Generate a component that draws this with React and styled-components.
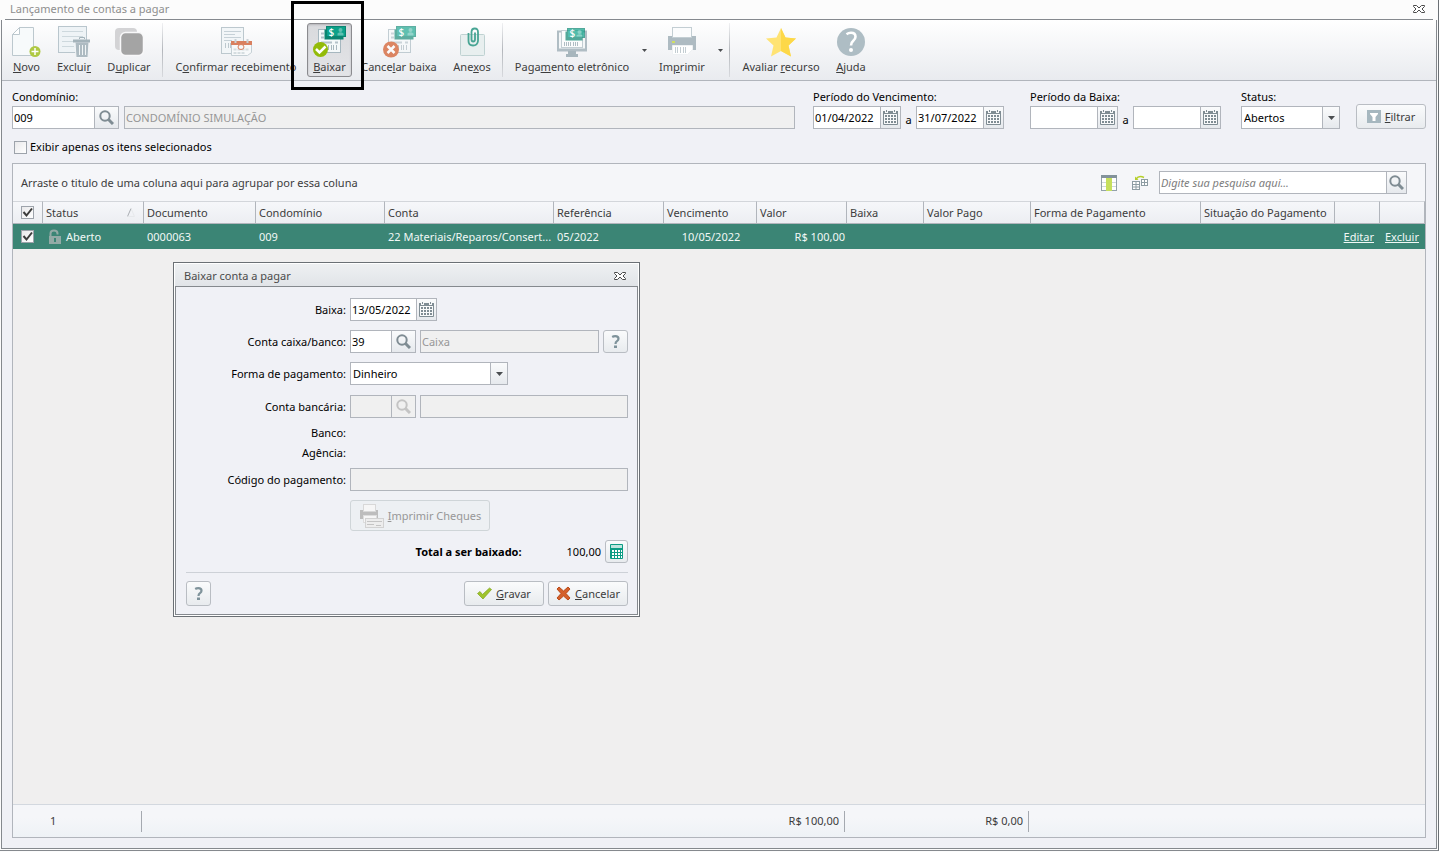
import React from 'react';
import styled, { createGlobalStyle, css } from 'styled-components';

const colors = {
  background: '#f0f1f6',
  line: '#b1b5bc',
  frame: '#85898e',
  text: '#3c3c3c',
  muted: '#979797',
  disabled: '#f0f0f0',
  row: '#3b8575',
  icon: '#7f8c93',
};

const GlobalStyle = createGlobalStyle`
  * {
    box-sizing: border-box;
  }

  body {
    margin: 0;
    background: #fcfcfc;
  }

  body, button, input, select {
    font-family: 'Noto Sans', 'Open Sans', sans-serif;
    font-size: 11px;
    line-height: 18px;
  }
`;

// ---------- Janela ----------

const Window = styled.div`
  position: relative;
  display: flex;
  flex-direction: column;
  min-height: calc(100vh - 1px);
  padding: 0 1px 1px;
  border-right: 1px solid #6b7075;
  border-bottom: 1px solid ${colors.frame};
`;

const TitleBar = styled.header`
  display: flex;
  align-items: center;
  justify-content: space-between;
  height: 20px;
  margin: 0 4px;
  padding: 0 8px 2px 5px;
  border-bottom: 1px solid ${colors.frame};
  color: #8e8e8e;
`;

const WindowTitle = styled.h1`
  margin: 0;
  font-size: 11px;
  font-weight: 400;
`;

const CloseButton = styled.button`
  display: flex;
  padding: 0;
  border: 0;
  background: none;
`;

const WindowBody = styled.main`
  flex: 1;
  display: flex;
  flex-direction: column;
  border: 1px solid ${colors.frame};
  border-top: 0;
  background: ${colors.background};
`;

// ---------- Barra de ferramentas ----------

const Toolbar = styled.nav`
  display: flex;
  align-items: center;
  height: 61px;
  padding: 0 2px;
  border-bottom: 1px solid ${colors.line};
  background: linear-gradient(#ffffff, #e9ebef);
`;

const ToolItem = styled.div`
  position: relative;
  flex: none;
  display: flex;
  width: ${props => props.$width}px;
`;

const ToolButton = styled.button`
  flex: 1;
  min-width: 0;
  display: flex;
  flex-direction: column;
  align-items: center;
  height: 54px;
  margin: 0 1px;
  padding: 2px 0 0;
  border: 1px solid transparent;
  border-radius: 3px;
  background: none;
  color: ${colors.text};
  white-space: nowrap;

  ${props => props.$pressed && css`
    border-color: #8b8b8f;
    background: linear-gradient(#d9dadd, #e3e4e7);
    box-shadow: inset 0 1px 2px #b5b5b9;
  `}
`;

const Highlight = styled.div`
  position: absolute;
  z-index: 1;
  top: -22px;
  bottom: -13px;
  left: -15px;
  right: -11px;
  border: 3px solid #000000;
  pointer-events: none;
`;

const DropButton = styled.button`
  display: flex;
  align-items: center;
  justify-content: center;
  width: 12px;
  height: 54px;
  padding: 0;
  border: 0;
  background: none;
`;

const Separator = styled.div`
  width: 1px;
  height: 54px;
  margin: 0 3px;
  background: linear-gradient(#f0f1f3, #b4b7bc, #d8dade);
`;

// ---------- Campos ----------

const Filters = styled.section`
  display: flex;
  align-items: flex-end;
  padding: 7px 10px 0;
`;

const FilterGroup = styled.div`
  flex: ${props => (props.$grow ? '1' : 'none')};
  min-width: 0;
  margin-right: ${props => props.$space}px;
`;

const FieldLabel = styled.label`
  display: block;
  color: #000000;
  white-space: nowrap;
`;

const Line = styled.div`
  display: flex;
  align-items: center;
  gap: ${props => props.$gap || 0}px;
`;

const Between = styled.span`
  width: 15px;
  padding-top: 4px;
  text-align: center;
`;

const Box = styled.div`
  flex: ${props => (props.$width ? 'none' : '1')};
  width: ${props => (props.$width ? `${props.$width}px` : 'auto')};
  min-width: 0;
  height: 23px;
  display: flex;
  border: 1px solid ${colors.line};
  background: ${props => (props.$disabled ? colors.disabled : '#ffffff')};
`;

const TextInput = styled.input`
  flex: 1;
  width: 0;
  min-width: 0;
  padding: 0 1px;
  border: 0;
  outline: 0;
  background: transparent;
  color: #000000;

  &:disabled {
    color: ${colors.muted};
  }

  &::placeholder {
    color: #7d7d7d;
    font-style: italic;
    opacity: 1;
  }
`;

const BoxButton = styled.button`
  flex: none;
  display: flex;
  align-items: center;
  justify-content: center;
  width: ${props => props.$width}px;
  padding: 0;
  border: 0;
  border-left: 1px solid ${colors.line};
  background: ${props => (props.disabled ? colors.disabled : 'linear-gradient(#fafbfc, #e6e9ed)')};
`;

const SelectBox = styled.div`
  display: grid;
  width: ${props => props.$width}px;
  height: 23px;
  border: 1px solid ${colors.line};
  background: #ffffff;
`;

const SelectInput = styled.select`
  grid-area: 1 / 1;
  appearance: none;
  padding: 0 18px 0 2px;
  border: 0;
  outline: 0;
  background: transparent;
  color: #000000;
`;

const SelectArrow = styled.span`
  grid-area: 1 / 1;
  justify-self: end;
  display: flex;
  align-items: center;
  justify-content: center;
  width: 17px;
  border-left: 1px solid ${colors.line};
  background: linear-gradient(#fafbfc, #e6e9ed);
  pointer-events: none;
`;

const PushButton = styled.button`
  flex: none;
  display: flex;
  align-items: center;
  justify-content: center;
  gap: 4px;
  width: ${props => props.$width}px;
  height: ${props => props.$height || 25}px;
  padding: 0;
  border: 1px solid #b9bdc3;
  border-radius: 3px;
  background: linear-gradient(#fafbfc, #e8ebee);
  color: ${colors.text};
  white-space: nowrap;

  &:disabled {
    border-color: #cfd5d8;
    background: #edf0f3;
    color: ${colors.muted};
  }
`;

const CheckRow = styled.div`
  display: flex;
  align-items: center;
  gap: 3px;
  margin: 9px 10px 7px 12px;
`;

const CheckWrap = styled.span`
  display: inline-grid;
  width: 13px;
  height: 13px;
  vertical-align: middle;

  svg {
    grid-area: 1 / 1;
    pointer-events: none;
  }
`;

const CheckInput = styled.input`
  grid-area: 1 / 1;
  appearance: none;
  width: 13px;
  height: 13px;
  margin: 0;
  border: 1px solid #9da3ab;
  background: linear-gradient(135deg, #e9e9eb, #ffffff);
`;

// ---------- Grade ----------

const GridPanel = styled.section`
  flex: 1;
  display: flex;
  flex-direction: column;
  margin: 0 10px 10px;
  border: 1px solid ${colors.line};
  background: #f0efef;
`;

const GroupBar = styled.div`
  display: flex;
  align-items: center;
  justify-content: space-between;
  height: 37px;
  padding: 0 18px 0 8px;
  background: #f5f6f9;
  color: ${colors.text};
`;

const GridTools = styled.div`
  display: flex;
  align-items: center;
`;

const IconButton = styled.button`
  display: flex;
  margin-right: ${props => props.$space}px;
  padding: 0;
  border: 0;
  background: none;
`;

const DataTable = styled.table`
  width: 100%;
  table-layout: fixed;
  border-collapse: separate;
  border-spacing: 0;
`;

const HeadCell = styled.th`
  height: 23px;
  padding: 0 0 0 3px;
  border: 0 solid ${colors.line};
  border-width: 1px 1px 1px 0;
  border-top-color: #d3d6db;
  background: linear-gradient(#f6f7fa, #eceef2);
  color: ${colors.text};
  font-weight: 400;
  line-height: 0;
  text-align: left;
  white-space: nowrap;
`;

const HeadContent = styled.span`
  display: flex;
  align-items: center;
  justify-content: space-between;
  padding-right: 8px;
  line-height: 18px;
`;

const Cell = styled.td`
  height: 25px;
  padding: 0 2px 0 3px;
  overflow: hidden;
  background: ${colors.row};
  color: #f1f8f6;
  text-align: ${props => props.$align || 'left'};
  white-space: nowrap;
`;

const CheckSlot = styled.span`
  display: flex;
  padding-left: 5px;
`;

const CellLink = styled.a`
  padding-right: 4px;
  color: #f1f8f6;
  text-decoration: underline;
`;

const StatusContent = styled.span`
  display: flex;
  align-items: center;
  gap: 5px;
  padding-left: 2px;
`;

const Summary = styled.footer`
  display: grid;
  grid-template-columns: 129fr 703fr 184fr 396fr;
  align-items: center;
  height: 33px;
  margin-top: auto;
  border-top: 1px solid #d3d8df;
  background: linear-gradient(#f5f6f9 40%, #eef2f6);
  color: ${colors.text};
`;

const SummaryCell = styled.span`
  height: 21px;
  padding: 1px 5px 0 37px;
  border-right: 1px solid #a5a9b0;
  text-align: ${props => props.$align || 'right'};
`;

// ---------- Diálogo ----------

const Dialog = styled.section`
  position: absolute;
  top: 262px;
  left: 173px;
  width: 467px;
  padding: 1px;
  border: 1px solid #6b7075;
  background: #ffffff;
`;

const DialogHeader = styled.header`
  display: flex;
  align-items: center;
  justify-content: space-between;
  height: 23px;
  padding: 2px 12px 0 9px;
  border-bottom: 1px solid ${colors.frame};
  background: linear-gradient(#eef0f2, #e1e4e8);
  color: #4b4b4b;
`;

const DialogTitle = styled.h2`
  margin: 0;
  font-size: 11px;
  font-weight: 400;
`;

const DialogBody = styled.form`
  padding: 11px 9px 8px 10px;
  border: 1px solid ${colors.frame};
  border-top: 0;
  background: ${colors.background};
`;

const FormRow = styled.div`
  display: grid;
  grid-template-columns: 160px 1fr;
  column-gap: 4px;
  align-items: center;
  min-height: ${props => (props.$plain ? 20 : 23)}px;
  margin-bottom: ${props => (props.$space || 0)}px;
`;

const FormLabel = styled.label`
  color: #000000;
  text-align: right;
`;

const TotalRow = styled.div`
  display: flex;
  align-items: center;
  justify-content: flex-end;
  margin: 9px 0;
`;

const TotalLabel = styled.strong`
  font-weight: 700;
  margin-right: 45px;
`;

const TotalValue = styled.output`
  margin-right: 4px;
`;

const DialogActions = styled.div`
  display: flex;
  align-items: center;
  gap: 4px;
  padding-top: 8px;
  border-top: 1px solid #cdd1d7;
`;

const Spacer = styled.span`
  flex: 1;
`;

// ---------- Ícones ----------

const Svg = ({ w = 32, h = 32, children, ...rest }) => (
  <svg width={w} height={h} viewBox={`0 0 ${w} ${h}`} fill="none" aria-hidden="true" {...rest}>
    {children}
  </svg>
);

const NewIcon = () => (
  <Svg>
    <path d="M8.5 1.5H22.5V29.5H1.5V8.5Z" fill="#f7fafb" stroke="#bcc8ce" />
    <path d="M8.5 1.5V8.5H1.5Z" fill="#ffffff" stroke="#bcc8ce" />
    <circle cx="24" cy="25.5" r="5.5" fill="#afc943" />
    <path d="M24 22V29M20.5 25.5H27.5" stroke="#ffffff" strokeWidth="1.5" />
  </Svg>
);

const DeleteIcon = () => (
  <Svg>
    <rect x="0.5" y="0.5" width="28" height="26" fill="#eef3f6" stroke="#b9c6cd" />
    <path d="M4 5.5H25M4 10.5H25M4 15.5H16M4 20.5H16" stroke="#cdd8dd" />
    <path d="M17 16H31L30 31.5H18Z" fill="#aebbc2" stroke="#f4f6f8" />
    <path d="M15 15H32" stroke="#a4b3ba" strokeWidth="3" />
    <path d="M21.5 13V11.5H26.5V13" stroke="#a4b3ba" />
    <path d="M21.5 19V29M24.5 19V29M27.5 19V29" stroke="#f1f5f6" strokeWidth="1" />
  </Svg>
);

const DuplicateIcon = () => (
  <Svg>
    <rect x="2" y="2" width="22" height="22" rx="4" fill="#d3d3d5" />
    <rect x="7.5" y="6.5" width="23" height="23" rx="5" fill="#a4a4a4" stroke="#f8f8f9" strokeWidth="1.5" />
  </Svg>
);

const ReceiveIcon = () => (
  <Svg>
    <rect x="1.5" y="1.5" width="22" height="26" fill="#f2f6f8" stroke="#bcc8ce" />
    <path d="M4 5.5H21M4 8.5H15M4 11.5H21M4 14.5H12" stroke="#c6d1d7" />
    <path d="M5.5 17V22M8.5 17V22M10.5 17V22" stroke="#bcc8ce" />
    <path d="M11.5 15.5H31.5V26.5L27.5 29.5H11.5Z" fill="#f7f9fa" stroke="#c5d0d5" />
    <rect x="11" y="15" width="21" height="4" fill="#d9805f" />
    <path d="M15.5 13V17M27.5 13V17" stroke="#c9d1d5" strokeWidth="2" />
    <path d="M13.5 23.5H29.5M13.5 27H25" stroke="#d5dde0" strokeWidth="2" strokeDasharray="3 1" />
    <ellipse cx="21" cy="21" rx="3" ry="2.5" fill="#f7f9fa" stroke="#d9805f" />
  </Svg>
);

const Bill = ({ x, y, w = 19, h = 10 }) => (
  <>
    <rect x={x - 2} y={y + 3} width={w} height={h} fill="#0b8571" />
    <rect x={x} y={y} width={w} height={h} fill="#0ca189" stroke="#0b8571" />
    <text x={x + 2} y={y + h - 1} fill="#ffffff" fontSize="10" fontWeight="500">$</text>
    <circle cx={x + w - 5} cy={y + 3.5} r="2" fill="#5fc0b0" />
    <path d={`M${x + w - 8} ${y + h - 1}V${y + 7}Q${x + w - 5} ${y + 4.5} ${x + w - 2} ${y + 7}V${y + h - 1}Z`} fill="#5fc0b0" />
  </>
);

const SettleIcon = ({ cancel }) => (
  <Svg w={33} opacity={cancel ? 0.65 : 1}>
    <rect x="5.5" y="3.5" width="22" height="23" fill="#f5f9fa" stroke="#a6b7bf" />
    <path d="M8 7.5H11M8 11.5H11M8 16.5H19M22 16.5H25" stroke="#b4c2c9" strokeWidth="2" />
    <path d="M15.5 19V24M18.5 19V24M20.5 19V24M23.5 19V24" stroke="#a9b8bf" />
    <Bill x={13.5} y={0.5} />
    {cancel ? (
      <>
        <circle cx="8" cy="23.5" r="8" fill="#cf4a14" />
        <path d="M4.5 20L11.5 27M11.5 20L4.5 27" stroke="#ffffff" strokeWidth="2.5" />
      </>
    ) : (
      <>
        <circle cx="7.5" cy="23.5" r="7.5" fill="#93bb08" />
        <path d="M3 23L6.5 26.5L12.5 20.5" stroke="#ffffff" strokeWidth="2.5" />
      </>
    )}
  </Svg>
);

const AttachIcon = () => (
  <Svg>
    <rect x="4.5" y="8.5" width="24" height="21" rx="1" fill="#e8efef" stroke="#bfd2d2" />
    <path d="M12.5 7V15Q12.5 19.5 17 19.5T22 15V6Q22 2.5 18.8 2.5T15.5 6V13.5Q15.5 15.5 17.2 15.5T19 13.5V6.5" stroke="#48a594" strokeWidth="1.8" />
  </Svg>
);

const PaymentIcon = () => (
  <Svg>
    <path d="M6 5.5H2V24H30V5.5H27" fill="#f4f7f8" stroke="#b0bdc4" strokeWidth="2" />
    <path d="M1 24H31" stroke="#b0bdc4" strokeWidth="3" />
    <path d="M12 25H20V28H22V31H10V28H12Z" fill="#a7b6bd" />
    <rect x="5.5" y="4.5" width="21" height="17" fill="#fbfcfc" stroke="#c3ced3" />
    <path d="M8.5 16V20M10.5 16V20M12.5 16V20M14.5 16V20M17.5 16V20M19.5 16V20M21.5 16V20" stroke="#b0bdc3" />
    <g opacity="0.7"><Bill x={11.5} y={2.5} w={17} h={9} /></g>
  </Svg>
);

const PrinterIcon = () => (
  <Svg>
    <path d="M2 10H30V24H2Z" fill="#aebbc2" />
    <rect x="6.5" y="1.5" width="19" height="10" fill="#fbfcfd" stroke="#c3ced3" />
    <rect x="6" y="15" width="3" height="2" fill="#cfdf62" />
    <path d="M6.5 19.5H26.5V23.5L21.5 28.5H6.5Z" fill="#ffffff" stroke="#eef1f3" />
    <path d="M9.5 21V27M11.5 21V27M14.5 21V27M17.5 21V27M19.5 21V27" stroke="#c3cdd2" />
  </Svg>
);

const StarIcon = () => (
  <Svg>
    <path d="M16 2L20.5 11.5L31 12.5L23.5 19.5L26 30.5L16 25L6 30.5L8.5 19.5L1 12.5L11.5 11.5Z" fill="#ffe373" />
    <path d="M16 2L20.5 11.5L31 12.5L23.5 19.5L26 30.5L16 25Z" fill="#fdd848" />
  </Svg>
);

const HelpIcon = () => (
  <Svg>
    <circle cx="16" cy="16" r="14" fill="#aebdc4" />
    <path d="M11.5 8.2Q13.5 6.8 16 6.8Q20.5 6.8 20.5 10.8Q20.5 13 18.3 14.8Q16 16.6 16 19.5" stroke="#ffffff" strokeWidth="2.6" />
    <circle cx="16" cy="24" r="2" fill="#ffffff" />
  </Svg>
);

const ArrowDown = ({ small }) => (
  <svg width={small ? 5 : 7} height={small ? 3 : 4} viewBox="0 0 7 4" preserveAspectRatio="none" aria-hidden="true">
    <path d="M0 0H7L3.5 4Z" fill="#4a4d50" />
  </svg>
);

const SearchIcon = ({ color = colors.icon }) => (
  <Svg w={15} h={15}>
    <circle cx="6" cy="6" r="4.7" stroke={color} strokeWidth="2" />
    <path d="M9.5 9.5L14 14" stroke={color} strokeWidth="3" />
  </Svg>
);

const CalendarIcon = () => (
  <Svg w={15} h={15}>
    <path d="M0.5 2V14.5H14.5V2" fill="#f8f9fa" stroke={colors.icon} />
    <path d="M0 1H2V3H5V1H10V3H13V1H15V4H0Z" fill={colors.icon} />
    <path d="M3.5 0V2M11.5 0V2" stroke={colors.icon} />
    <path d="M2 6H13M2 9H13M2 12H13" stroke={colors.icon} strokeWidth="2" strokeDasharray="2 1" />
  </Svg>
);

const FilterIcon = () => (
  <Svg w={14} h={13}>
    <rect width="14" height="13" fill="#a6b7bf" />
    <path d="M3 3H11V4L8.5 7V11H5.5V7L3 4Z" fill="#ffffff" />
  </Svg>
);

const CloseIcon = () => (
  <Svg w={12} h={10}>
    <path d="M0.5 1.5H3.5L6 4L8.5 1.5H11.5V2.5L9 5L11.5 7.5V8.5H8.5L6 6L3.5 8.5H0.5V7.5L3 5L0.5 2.5Z" fill="#ffffff" stroke="#4b4b4b" />
  </Svg>
);

const ColumnsIcon = () => (
  <Svg w={16} h={16}>
    <rect x="0.5" y="1.5" width="15" height="14" fill="#ffffff" stroke="#93a2a9" />
    <path d="M1 7.5H15M1 11.5H15" stroke="#cfd8dc" />
    <rect x="5" y="2" width="6" height="14" fill="#c6df5d" />
    <path d="M0 1.5H16" stroke="#83939b" strokeWidth="3" />
  </Svg>
);

const RestoreIcon = () => (
  <Svg w={16} h={16}>
    <rect x="0.5" y="6.5" width="7" height="8" fill="#ffffff" stroke="#8d9ca3" />
    <path d="M1 9.5H8M1 12H8M4 7V15" stroke="#8d9ca3" />
    <rect x="9.5" y="4.5" width="6" height="6" fill="#ffffff" stroke="#8d9ca3" />
    <path d="M9 7.5H16M12.5 5V11" stroke="#8d9ca3" />
    <path d="M4 4Q7 0 12 2.5" stroke="#b5cf28" strokeWidth="1.5" />
    <path d="M3 1.5V5H6.5Z" fill="#b5cf28" />
  </Svg>
);

const LockIcon = () => (
  <Svg w={13} h={16}>
    <path d="M2.5 8V4.5Q2.5 1.5 6 1.5T9.5 4.5V5.5" stroke="#93aaa6" strokeWidth="2" />
    <rect x="1" y="7" width="12" height="8" fill="#93aaa6" />
    <path d="M7 9V13" stroke={colors.row} strokeWidth="2" />
  </Svg>
);

const SortIcon = () => (
  <Svg w={8} h={9}>
    <path d="M0.5 8.5L4 0.5" stroke="#a8acb1" />
    <path d="M4 0.5L7.5 8.5H0.5" stroke="#e6e8eb" />
  </Svg>
);

const CheckMark = () => (
  <Svg w={13} h={13}>
    <path d="M2.5 6L5.5 9.5L11 2.5" stroke="#3c3c3c" strokeWidth="2" />
  </Svg>
);

const SmallHelpIcon = () => (
  <Svg w={9} h={13}>
    <path d="M1.2 2Q2.5 1.2 4.3 1.2Q7.5 1.2 7.5 3.8Q7.5 5.2 6 6.2Q4.5 7.2 4.5 9" stroke="#7f939b" strokeWidth="2.2" />
    <rect x="3" y="10.5" width="3" height="2.5" fill="#7f939b" />
  </Svg>
);

const CalculatorIcon = () => (
  <Svg w={13} h={15}>
    <rect width="13" height="15" rx="1" fill="#0c9c84" />
    <rect x="1" y="1" width="11" height="3" fill="#bfe5de" />
    <path d="M2 7H12M2 10H12M2 13H12" stroke="#ffffff" strokeWidth="2" strokeDasharray="2 1" />
  </Svg>
);

const ConfirmIcon = () => (
  <Svg w={15} h={13}>
    <path d="M0.5 6.5L3 4.5L5.5 7.5L12.5 1L14.5 2.5L6 12Z" fill="#9fc42c" stroke="#7fa31b" strokeWidth="0.7" />
  </Svg>
);

const CancelIcon = () => (
  <Svg w={15} h={15}>
    <path d="M3 1L7.5 5L12 1L14 3L10 7.5L14 12L12 14L7.5 10L3 14L1 12L5 7.5L1 3Z" fill="#d4602b" stroke="#bb4c1a" />
  </Svg>
);

const ChequeIcon = () => (
  <Svg w={25} h={25}>
    <path d="M1 7H19V16H1Z" fill="#bdbdbd" />
    <rect x="4.5" y="1.5" width="12" height="7" fill="#f6f6f6" stroke="#d8d8d8" />
    <rect x="4.5" y="12.5" width="13" height="7" fill="#f6f6f6" stroke="#dddddd" />
    <rect x="6.5" y="15.5" width="18" height="9" fill="#ededed" stroke="#d2d2d2" />
    <path d="M8 18.5H23M8 21.5H15M17 22.5H22" stroke="#c4c4c4" />
  </Svg>
);

// ---------- Peças reutilizáveis ----------

const Checkbox = (props) => (
  <CheckWrap>
    <CheckInput type="checkbox" {...props} />
    {props.defaultChecked && <CheckMark />}
  </CheckWrap>
);

const DateField = ({ id, label, value, width = 88 }) => (
  <Box $width={width}>
    <TextInput id={id} aria-label={label} defaultValue={value} />
    <BoxButton type="button" $width={20} aria-label="Abrir calendário"><CalendarIcon /></BoxButton>
  </Box>
);

const Tool = ({ icon, width, pressed, highlighted, children }) => (
  <ToolItem $width={width}>
    <ToolButton type="button" $pressed={pressed} aria-pressed={pressed}>
      {icon}
      <span>{children}</span>
    </ToolButton>
    {highlighted && <Highlight />}
  </ToolItem>
);

const columns = [
  { title: '', width: 30 },
  { title: 'Status', width: 101, sorted: true },
  { title: 'Documento', width: 112 },
  { title: 'Condomínio', width: 129 },
  { title: 'Conta', width: 169 },
  { title: 'Referência', width: 110 },
  { title: 'Vencimento', width: 93 },
  { title: 'Valor', width: 90 },
  { title: 'Baixa', width: 77 },
  { title: 'Valor Pago', width: 107 },
  { title: 'Forma de Pagamento', width: 170 },
  { title: 'Situação do Pagamento', width: 134 },
  { title: '', width: 45 },
  { title: '', width: 45 },
];

const PayableToolbar = () => (
  <Toolbar>
    <Tool width={45} icon={<NewIcon />}><u>N</u>ovo</Tool>
    <Tool width={50} icon={<DeleteIcon />}>Exclui<u>r</u></Tool>
    <Tool width={60} icon={<DuplicateIcon />}>D<u>u</u>plicar</Tool>
    <Separator />
    <Tool width={140} icon={<ReceiveIcon />}>C<u>o</u>nfirmar recebimento</Tool>
    <Tool width={47} icon={<SettleIcon />} pressed highlighted><u>B</u>aixar</Tool>
    <Tool width={92} icon={<SettleIcon cancel />}>Cance<u>l</u>ar baixa</Tool>
    <Tool width={54} icon={<AttachIcon />}>Ane<u>x</u>os</Tool>
    <Separator />
    <Tool width={132} icon={<PaymentIcon />}>Paga<u>m</u>ento eletrônico</Tool>
    <DropButton type="button" aria-label="Mais opções de pagamento"><ArrowDown small /></DropButton>
    <Tool width={64} icon={<PrinterIcon />}>Im<u>p</u>rimir</Tool>
    <DropButton type="button" aria-label="Mais opções de impressão"><ArrowDown small /></DropButton>
    <Separator />
    <Tool width={96} icon={<StarIcon />}>Avaliar <u>r</u>ecurso</Tool>
    <Tool width={44} icon={<HelpIcon />}><u>A</u>juda</Tool>
  </Toolbar>
);

const PayableFilters = () => (
  <>
    <Filters>
      <FilterGroup $grow $space={18}>
        <FieldLabel htmlFor="condominio">Condomínio:</FieldLabel>
        <Line $gap={5}>
          <Box $width={107}>
            <TextInput id="condominio" defaultValue="009" />
            <BoxButton type="button" $width={24} aria-label="Buscar condomínio"><SearchIcon /></BoxButton>
          </Box>
          <Box $disabled>
            <TextInput aria-label="Nome do condomínio" defaultValue="CONDOMÍNIO SIMULAÇÃO" disabled />
          </Box>
        </Line>
      </FilterGroup>
      <FilterGroup $space={26}>
        <FieldLabel htmlFor="vencimento">Período do Vencimento:</FieldLabel>
        <Line>
          <DateField id="vencimento" value="01/04/2022" />
          <Between>a</Between>
          <DateField label="Vencimento final" value="31/07/2022" />
        </Line>
      </FilterGroup>
      <FilterGroup $space={20}>
        <FieldLabel htmlFor="baixa-inicial">Período da Baixa:</FieldLabel>
        <Line>
          <DateField id="baixa-inicial" />
          <Between>a</Between>
          <DateField label="Baixa final" />
        </Line>
      </FilterGroup>
      <FilterGroup $space={16}>
        <FieldLabel htmlFor="status">Status:</FieldLabel>
        <SelectBox $width={99}>
          <SelectInput id="status"><option>Abertos</option></SelectInput>
          <SelectArrow><ArrowDown /></SelectArrow>
        </SelectBox>
      </FilterGroup>
      <PushButton type="button" $width={70}><FilterIcon /><span><u>F</u>iltrar</span></PushButton>
    </Filters>
    <CheckRow>
      <Checkbox id="selecionados" />
      <FieldLabel htmlFor="selecionados">Exibir apenas os itens selecionados</FieldLabel>
    </CheckRow>
  </>
);

const PayableGrid = () => (
  <GridPanel>
    <GroupBar>
      <span>Arraste o titulo de uma coluna aqui para agrupar por essa coluna</span>
      <GridTools>
        <IconButton type="button" $space={15} aria-label="Colunas"><ColumnsIcon /></IconButton>
        <IconButton type="button" $space={11} aria-label="Restaurar colunas"><RestoreIcon /></IconButton>
        <Box $width={248}>
          <TextInput aria-label="Pesquisa" placeholder="Digite sua pesquisa aqui..." />
          <BoxButton type="button" $width={20} aria-label="Pesquisar"><SearchIcon /></BoxButton>
        </Box>
      </GridTools>
    </GroupBar>
    <DataTable>
      <colgroup>
        {columns.map((column, index) => <col key={index} width={column.width} />)}
      </colgroup>
      <thead>
        <tr>
          <HeadCell><CheckSlot><Checkbox aria-label="Selecionar todos" defaultChecked /></CheckSlot></HeadCell>
          {columns.slice(1).map((column, index) => (
            <HeadCell key={index}>
              <HeadContent>{column.title}{column.sorted && <SortIcon />}</HeadContent>
            </HeadCell>
          ))}
        </tr>
      </thead>
      <tbody>
        <tr>
          <Cell><CheckSlot><Checkbox aria-label="Selecionar 0000063" defaultChecked /></CheckSlot></Cell>
          <Cell><StatusContent><LockIcon />Aberto</StatusContent></Cell>
          <Cell>0000063</Cell>
          <Cell>009</Cell>
          <Cell>22 Materiais/Reparos/Consert...</Cell>
          <Cell>05/2022</Cell>
          <Cell $align="center">10/05/2022</Cell>
          <Cell $align="right">R$ 100,00</Cell>
          <Cell />
          <Cell />
          <Cell />
          <Cell />
          <Cell $align="right"><CellLink href="#editar">Editar</CellLink></Cell>
          <Cell $align="right"><CellLink href="#excluir">Excluir</CellLink></Cell>
        </tr>
      </tbody>
    </DataTable>
    <Summary>
      <SummaryCell $align="left">1</SummaryCell>
      <SummaryCell>R$ 100,00</SummaryCell>
      <SummaryCell>R$ 0,00</SummaryCell>
    </Summary>
  </GridPanel>
);

const PaymentDialog = () => (
  <Dialog role="dialog" aria-labelledby="dialog-title">
    <DialogHeader>
      <DialogTitle id="dialog-title">Baixar conta a pagar</DialogTitle>
      <CloseButton type="button" aria-label="Fechar"><CloseIcon /></CloseButton>
    </DialogHeader>
    <DialogBody onSubmit={event => event.preventDefault()}>
      <FormRow $space={9}>
        <FormLabel htmlFor="baixa">Baixa:</FormLabel>
        <DateField id="baixa" value="13/05/2022" width={87} />
      </FormRow>
      <FormRow $space={9}>
        <FormLabel htmlFor="caixa">Conta caixa/banco:</FormLabel>
        <Line $gap={4}>
          <Box $width={66}>
            <TextInput id="caixa" defaultValue="39" />
            <BoxButton type="button" $width={24} aria-label="Buscar conta"><SearchIcon /></BoxButton>
          </Box>
          <Box $disabled><TextInput aria-label="Nome da conta" defaultValue="Caixa" disabled /></Box>
          <PushButton type="button" $width={25} $height={23} aria-label="Ajuda da conta"><SmallHelpIcon /></PushButton>
        </Line>
      </FormRow>
      <FormRow $space={10}>
        <FormLabel htmlFor="forma">Forma de pagamento:</FormLabel>
        <SelectBox $width={158}>
          <SelectInput id="forma"><option>Dinheiro</option></SelectInput>
          <SelectArrow><ArrowDown /></SelectArrow>
        </SelectBox>
      </FormRow>
      <FormRow $space={5}>
        <FormLabel htmlFor="bancaria">Conta bancária:</FormLabel>
        <Line $gap={4}>
          <Box $width={66} $disabled>
            <TextInput id="bancaria" disabled />
            <BoxButton type="button" $width={24} disabled aria-label="Buscar conta bancária"><SearchIcon color="#c4c4c4" /></BoxButton>
          </Box>
          <Box $disabled><TextInput aria-label="Nome da conta bancária" disabled /></Box>
        </Line>
      </FormRow>
      <FormRow $plain><FormLabel as="span">Banco:</FormLabel></FormRow>
      <FormRow $plain $space={5}><FormLabel as="span">Agência:</FormLabel></FormRow>
      <FormRow $space={9}>
        <FormLabel htmlFor="codigo">Código do pagamento:</FormLabel>
        <Box $disabled><TextInput id="codigo" disabled /></Box>
      </FormRow>
      <FormRow>
        <span />
        <PushButton type="button" $width={140} $height={31} disabled>
          <ChequeIcon /><span><u>I</u>mprimir Cheques</span>
        </PushButton>
      </FormRow>
      <TotalRow>
        <TotalLabel>Total a ser baixado:</TotalLabel>
        <TotalValue>100,00</TotalValue>
        <PushButton type="button" $width={23} $height={23} aria-label="Calculadora"><CalculatorIcon /></PushButton>
      </TotalRow>
      <DialogActions>
        <PushButton type="button" $width={25} aria-label="Ajuda"><SmallHelpIcon /></PushButton>
        <Spacer />
        <PushButton type="submit" $width={80}><ConfirmIcon /><span><u>G</u>ravar</span></PushButton>
        <PushButton type="button" $width={80}><CancelIcon /><span><u>C</u>ancelar</span></PushButton>
      </DialogActions>
    </DialogBody>
  </Dialog>
);

const App = () => (
  <>
    <GlobalStyle />
    <Window>
      <TitleBar>
        <WindowTitle>Lançamento de contas a pagar</WindowTitle>
        <CloseButton type="button" aria-label="Fechar janela"><CloseIcon /></CloseButton>
      </TitleBar>
      <WindowBody>
        <PayableToolbar />
        <PayableFilters />
        <PayableGrid />
      </WindowBody>
      <PaymentDialog />
    </Window>
  </>
);

export default App;
